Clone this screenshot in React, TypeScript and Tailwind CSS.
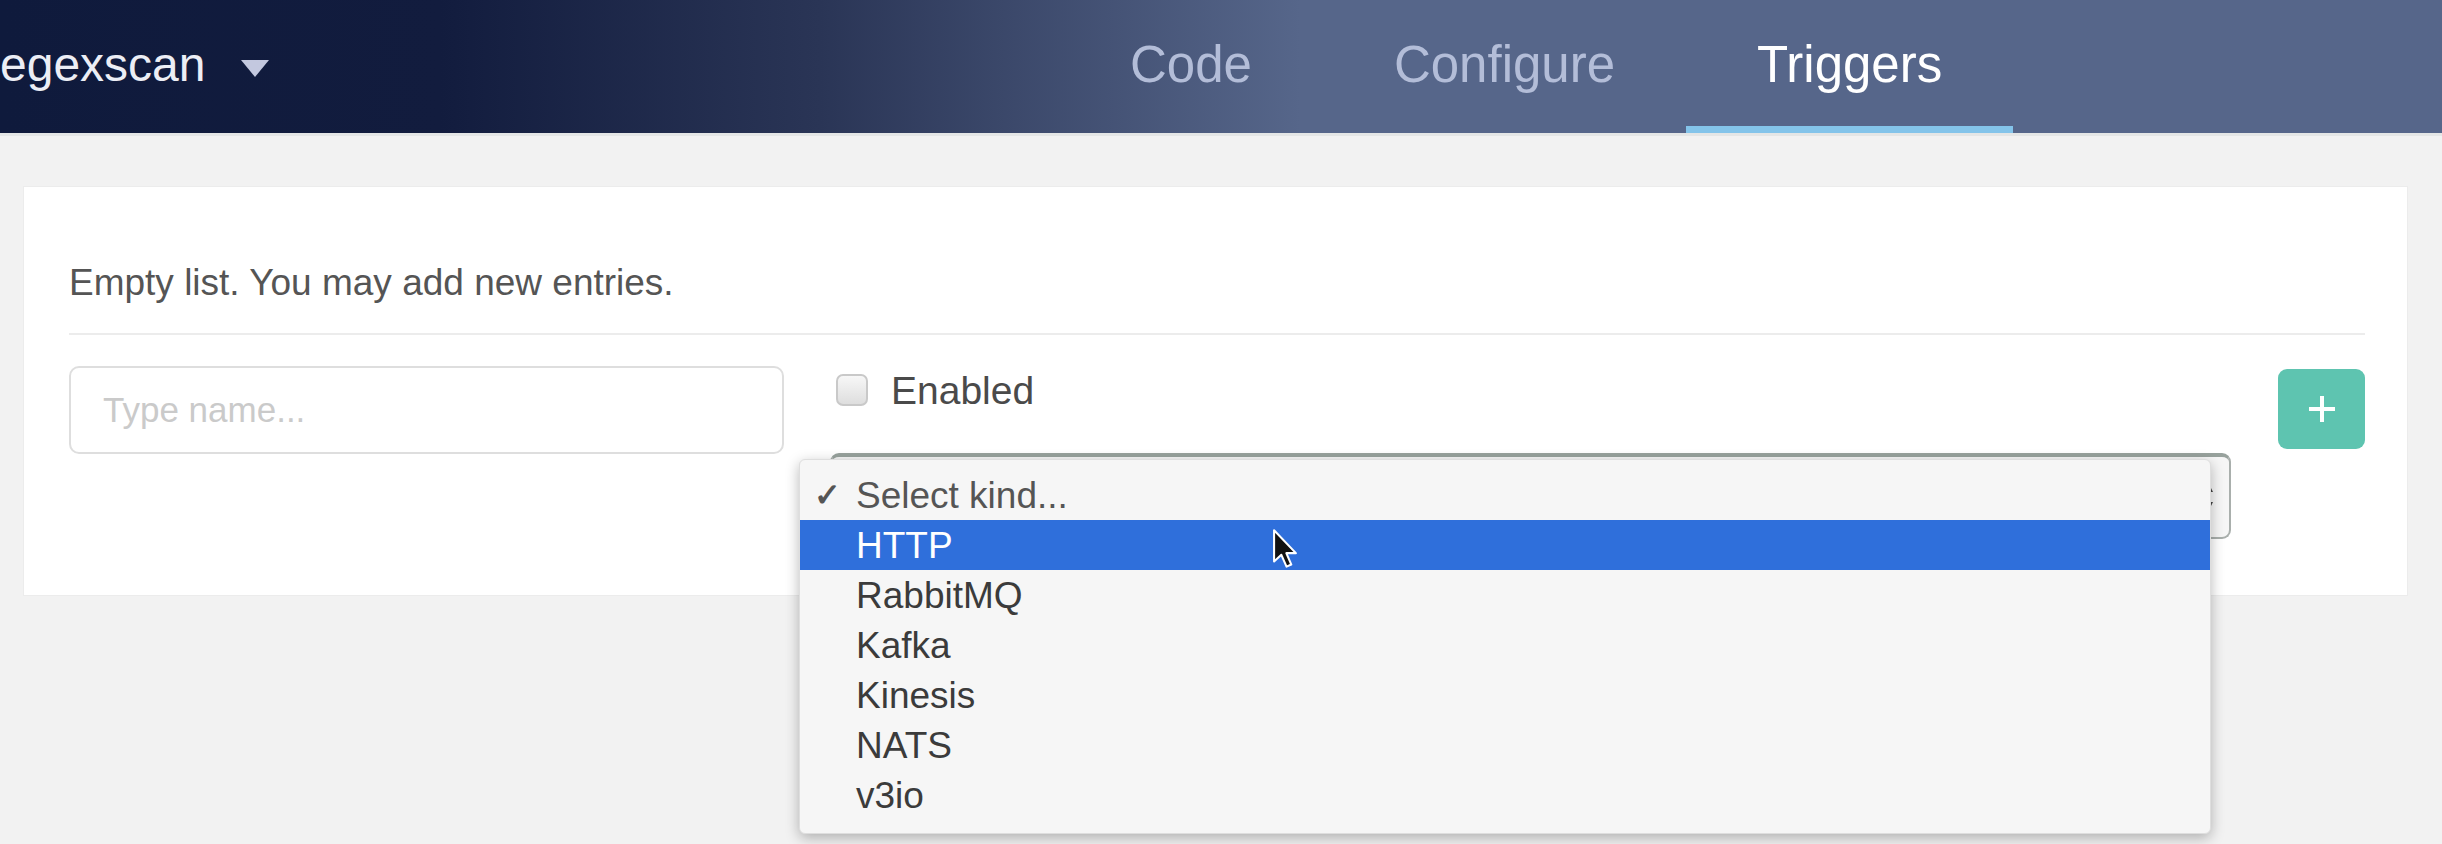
import React from 'react';

const kinds = ['HTTP', 'RabbitMQ', 'Kafka', 'Kinesis', 'NATS', 'v3io'];

const tabs = [
    { label: 'Code', active: false },
    { label: 'Configure', active: false },
    { label: 'Triggers', active: true },
];

const Header: React.FC = () => (
    <div className="h-[133px] flex items-stretch bg-[linear-gradient(to_right,#0f1a3c_0px,#121c3e_440px,#2a3556_820px,#56668a_1300px,#56668a_100%)]">
        <div className="w-[1059px] flex items-center gap-[36px] pb-1">
            <span className="text-[48px] leading-none text-[#eceef5]">egexscan</span>
            <svg width="28" height="17" viewBox="0 0 28 17" className="mt-2">
                <path d="M0 0 L28 0 L14 17 Z" fill="#c3c8df" />
            </svg>
        </div>
        <div className="flex items-stretch">
            {tabs.map(tab => (
                <div
                    key={tab.label}
                    className={`px-[71px] flex items-center pb-1 border-b-[7px] ${tab.active ? 'border-[#84c4ea] text-white' : 'border-transparent text-[#b3bdd8]'}`}
                >
                    <span className="text-[51px] leading-none pt-[7px]">{tab.label}</span>
                </div>
            ))}
        </div>
    </div>
);

const Cursor: React.FC = () => (
    <svg width="27" height="42" viewBox="0 0 13 20" className="absolute left-[472px] top-[68px]">
        <path d="M1 1 L1 16 L4.5 12.8 L7 18.5 L9.3 17.5 L6.9 12 L11.5 12 Z" fill="#111" stroke="#fff" strokeWidth="1" strokeLinejoin="round" />
    </svg>
);

const KindPopup: React.FC = () => (
    <div className="absolute left-[-33px] top-[2px] w-[1412px] pt-[10px] pb-[13px] bg-[#f6f6f6] rounded-[6px] shadow-[0_4px_14px_rgba(0,0,0,0.28)] border border-[#dedede] z-10">
        <div className="h-[50px] flex items-center relative pl-[56px] text-[#555]">
            <span className="absolute left-[14px] text-[32px] leading-none font-bold">✓</span>
            <span className="text-[37px] leading-none">Select kind...</span>
        </div>
        {kinds.map((kind, i) => (
            <div
                key={kind}
                className={`h-[50px] flex items-center pl-[56px] text-[37px] leading-none ${i === 0 ? 'bg-[#2f6fdb] text-white' : 'text-[#3b3b3b]'}`}
            >
                {kind}
            </div>
        ))}
        <Cursor />
    </div>
);

export default function App() {
    return (
        <div className="min-h-[844px] bg-[#f2f2f2] font-['Liberation_Sans',Arial,sans-serif] overflow-hidden">
            <Header />
            <div className="h-[3px] bg-[#e4e6e6]" />
            <div className="pl-[23px] pr-[34px] pt-[50px]">
                <div className="bg-white border border-[#ececec] pl-[45px] pr-[42px] pt-[74px] pb-[56px]">
                    <div className="pb-[28px] border-b-2 border-[#ececec] text-[37px] leading-[1.2] text-[#555]">
                        Empty list. You may add new entries.
                    </div>
                    <div className="flex items-start pt-[31px]">
                        <div className="w-[715px] h-[88px] border-2 border-[#dedede] rounded-[10px] flex items-center pl-[32px] text-[35px] text-[#cacaca]">
                            Type name...
                        </div>
                        <div className="flex-1 ml-[46px] flex flex-col">
                            <div className="flex items-center h-[56px] pl-[6px] gap-[23px] -mt-[4px]">
                                <div className="w-[32px] h-[32px] rounded-[7px] border-2 border-[#c9c9c9] bg-[linear-gradient(#f7f7f7,#dedede)]" />
                                <span className="text-[39px] leading-none text-[#4a4a4a]">Enabled</span>
                            </div>
                            <div className="relative mt-[35px] h-[86px] rounded-[9px] border-2 border-[#a9afac] border-t-[4px] border-t-[#98a29d] bg-[#f6f6f6] flex items-center justify-end pr-[16px]">
                                <svg width="8" height="26" viewBox="0 0 8 26">
                                    <path d="M4 0 L8 8 L0 8 Z" fill="#444" />
                                    <path d="M0 18 L8 18 L4 26 Z" fill="#444" />
                                </svg>
                                <KindPopup />
                            </div>
                        </div>
                        <div className="ml-[47px] mt-[3px] w-[87px] h-[80px] rounded-[9px] bg-[#5ec4b0] flex items-center justify-center">
                            <svg width="30" height="30" viewBox="0 0 30 30">
                                <path d="M15 2 V28 M2 15 H28" stroke="#fff" strokeWidth="4" />
                            </svg>
                        </div>
                    </div>
                </div>
            </div>
        </div>
    );
}
